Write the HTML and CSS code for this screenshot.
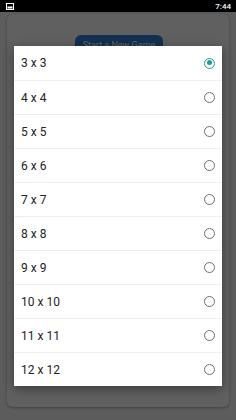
FILE: index.html
```html
<!DOCTYPE html>
<html lang="en">
<head>
  <meta charset="UTF-8" />
  <meta name="viewport" content="width=device-width, initial-scale=1.0"/>
  <title>Board size</title>
  <link rel="stylesheet" href="styles.css">
</head>
<body>

  <!-- status bar -->
  <div class="status-bar">
    <svg class="status-icon" width="8" height="7" viewBox="0 0 8 7">
      <rect x="0.5" y="0.5" width="7" height="6" fill="none" stroke="#fff" stroke-width="1"/>
      <rect x="1.5" y="3.5" width="5" height="2" fill="#fff"/>
    </svg>
    <span class="clock">7:44</span>
  </div>

  <!-- screen behind the dialog -->
  <div class="screen">
    <div class="card">
      <a href="#" class="btn start">Start a New Game</a>
    </div>
  </div>

  <div class="overlay"></div>

  <!-- size dialog -->
  <div class="dialog">
    <label class="option"><span>3 x 3</span><span class="radio checked"></span></label>
    <label class="option"><span>4 x 4</span><span class="radio"></span></label>
    <label class="option"><span>5 x 5</span><span class="radio"></span></label>
    <label class="option"><span>6 x 6</span><span class="radio"></span></label>
    <label class="option"><span>7 x 7</span><span class="radio"></span></label>
    <label class="option"><span>8 x 8</span><span class="radio"></span></label>
    <label class="option"><span>9 x 9</span><span class="radio"></span></label>
    <label class="option"><span>10 x 10</span><span class="radio"></span></label>
    <label class="option"><span>11 x 11</span><span class="radio"></span></label>
    <label class="option"><span>12 x 12</span><span class="radio"></span></label>
  </div>

</body>
</html>
```

FILE: styles.css
```css
/* Reset */
* {
  margin: 0;
  padding: 0;
  box-sizing: border-box;
}

body {
  font-family: Roboto, 'Noto Sans', sans-serif;
  background-color: #fafafa;
  width: 236px;
  height: 420px;
  overflow: hidden;
  position: relative;
}

/* status bar */
.status-bar {
  height: 12px;
  background-color: #000;
  display: flex;
  align-items: center;
  justify-content: space-between;
  padding: 0 5px 0 6px;
  position: relative;
  z-index: 3;
}

.clock {
  color: #fff;
  font-size: 8px;
  font-weight: 500;
}

/* screen behind */
.screen {
  height: 408px;
  background-color: #ececec;
  padding: 2px 7px 13px;
}

.card {
  height: 100%;
  background-color: #f7f7f7;
  border-radius: 6px;
  box-shadow: 0 1px 3px rgba(0, 0, 0, 0.3);
  display: flex;
  justify-content: center;
  padding-top: 21px;
}

.btn {
  display: inline-flex;
  align-items: flex-start;
  justify-content: center;
  text-decoration: none;
}

.btn.start {
  width: 88px;
  height: 26px;
  margin-left: 2px;
  background-color: #2f7bd0;
  color: #fff;
  font-size: 9px;
  border-radius: 6px;
  padding-top: 5px;
}

/* dimmed background */
.overlay {
  position: absolute;
  top: 12px;
  left: 0;
  right: 0;
  bottom: 0;
  background-color: rgba(0, 0, 0, 0.61);
  z-index: 1;
}

/* dialog */
.dialog {
  position: absolute;
  top: 46px;
  left: 14px;
  width: 208px;
  background-color: #fff;
  box-shadow: 0 3px 10px rgba(0, 0, 0, 0.4);
  z-index: 2;
}

.option {
  height: 34px;
  display: flex;
  align-items: center;
  justify-content: space-between;
  padding: 0 7px 0 7px;
  font-size: 12px;
  color: #222;
  border-top: 1px solid #efefef;
}

.option:first-child {
  border-top: none;
}

.radio {
  width: 11px;
  height: 11px;
  border: 1.2px solid #6f6f6f;
  border-radius: 50%;
  position: relative;
}

.radio.checked {
  border-color: #229e92;
}

.radio.checked::after {
  content: "";
  position: absolute;
  top: 1.6px;
  left: 1.6px;
  width: 5.4px;
  height: 5.4px;
  border-radius: 50%;
  background-color: #229e92;
}
```
